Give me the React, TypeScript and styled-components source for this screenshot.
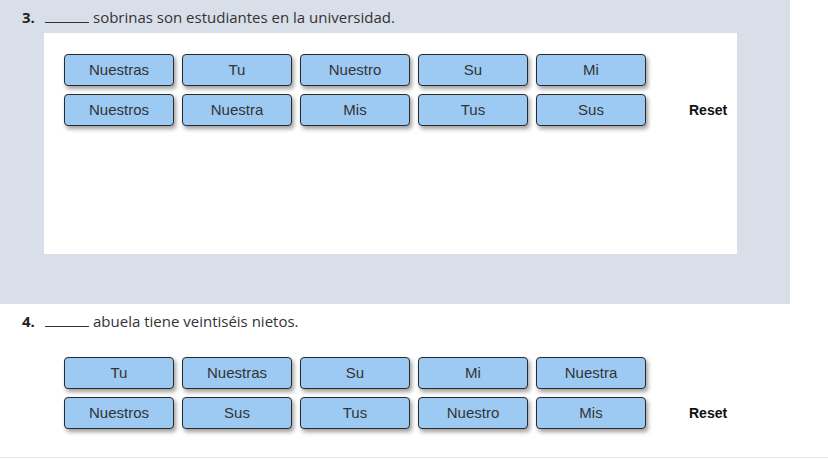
import React from "react";
import styled, { createGlobalStyle } from "styled-components";

const Global = createGlobalStyle`
  html, body { margin: 0; padding: 0; background: #ffffff; }
  body { font-family: "Open Sans", "Liberation Sans", sans-serif; }
`;

const Page = styled.div`
  width: 828px;
  height: 460px;
  overflow: hidden;
`;

const Section = styled.section<{ $shaded?: boolean }>`
  box-sizing: border-box;
  width: ${(p) => (p.$shaded ? "790px" : "828px")};
  background: ${(p) => (p.$shaded ? "#d9dfe9" : "#ffffff")};
  height: ${(p) => (p.$shaded ? "304px" : "154px")};
  padding-top: 7px;
  border-bottom: ${(p) => (p.$shaded ? "none" : "1px solid #e6e6e6")};
`;

const Question = styled.div`
  display: flex;
  align-items: baseline;
  padding-left: 22px;
  height: 20px;
  line-height: 20px;
  font-size: 15px;
  color: #333;
`;

const Num = styled.span`
  font-weight: 700;
  width: 23px;
  color: #222;
`;

const Blank = styled.span`
  display: inline-block;
  width: 44px;
  border-bottom: 1px solid #333;
  margin-right: 4px;
  height: 14px;
`;

const Panel = styled.div<{ $white?: boolean }>`
  margin-left: 44px;
  width: 693px;
  box-sizing: border-box;
  background: ${(p) => (p.$white ? "#ffffff" : "transparent")};
  height: ${(p) => (p.$white ? "221px" : "auto")};
  margin-top: ${(p) => (p.$white ? "6px" : "26px")};
  padding: ${(p) => (p.$white ? "21px 20px" : "0 20px")};
`;

const Grid = styled.div`
  display: grid;
  grid-template-columns: repeat(5, 110px) auto;
  grid-auto-rows: 32px;
  column-gap: 8px;
  row-gap: 8px;
`;

const Chip = styled.button`
  box-sizing: border-box;
  width: 110px;
  height: 32px;
  border: 1px solid #2a2a2a;
  border-radius: 4px;
  background: #9dcaf3;
  box-shadow: 2px 3px 4px rgba(0, 0, 0, 0.38);
  font-family: "Liberation Sans", Arial, sans-serif;
  font-size: 15px;
  color: #333;
  padding: 0 0 2px;
  cursor: pointer;
`;

const Reset = styled.button`
  grid-column: 6;
  grid-row: 2;
  align-self: center;
  justify-self: start;
  margin-left: 35px;
  border: none;
  background: transparent;
  font-family: "Liberation Sans", Arial, sans-serif;
  font-weight: 700;
  font-size: 14px;
  color: #111;
  padding: 0;
  cursor: pointer;
`;

const Bank = ({ words }: { words: string[] }) => (
  <Grid>
    {words.map((w, i) => (
      <Chip key={i} style={{ gridRow: i < 5 ? 1 : 2 }}>
        {w}
      </Chip>
    ))}
    <Reset>Reset</Reset>
  </Grid>
);

export default function App() {
  return (
    <Page>
      <Global />
      <Section $shaded>
        <Question>
          <Num>3.</Num>
          <Blank />
          sobrinas son estudiantes en la universidad.
        </Question>
        <Panel $white>
          <Bank
            words={["Nuestras", "Tu", "Nuestro", "Su", "Mi", "Nuestros", "Nuestra", "Mis", "Tus", "Sus"]}
          />
        </Panel>
      </Section>
      <Section>
        <Question>
          <Num>4.</Num>
          <Blank />
          abuela tiene veintiséis nietos.
        </Question>
        <Panel>
          <Bank
            words={["Tu", "Nuestras", "Su", "Mi", "Nuestra", "Nuestros", "Sus", "Tus", "Nuestro", "Mis"]}
          />
        </Panel>
      </Section>
    </Page>
  );
}
